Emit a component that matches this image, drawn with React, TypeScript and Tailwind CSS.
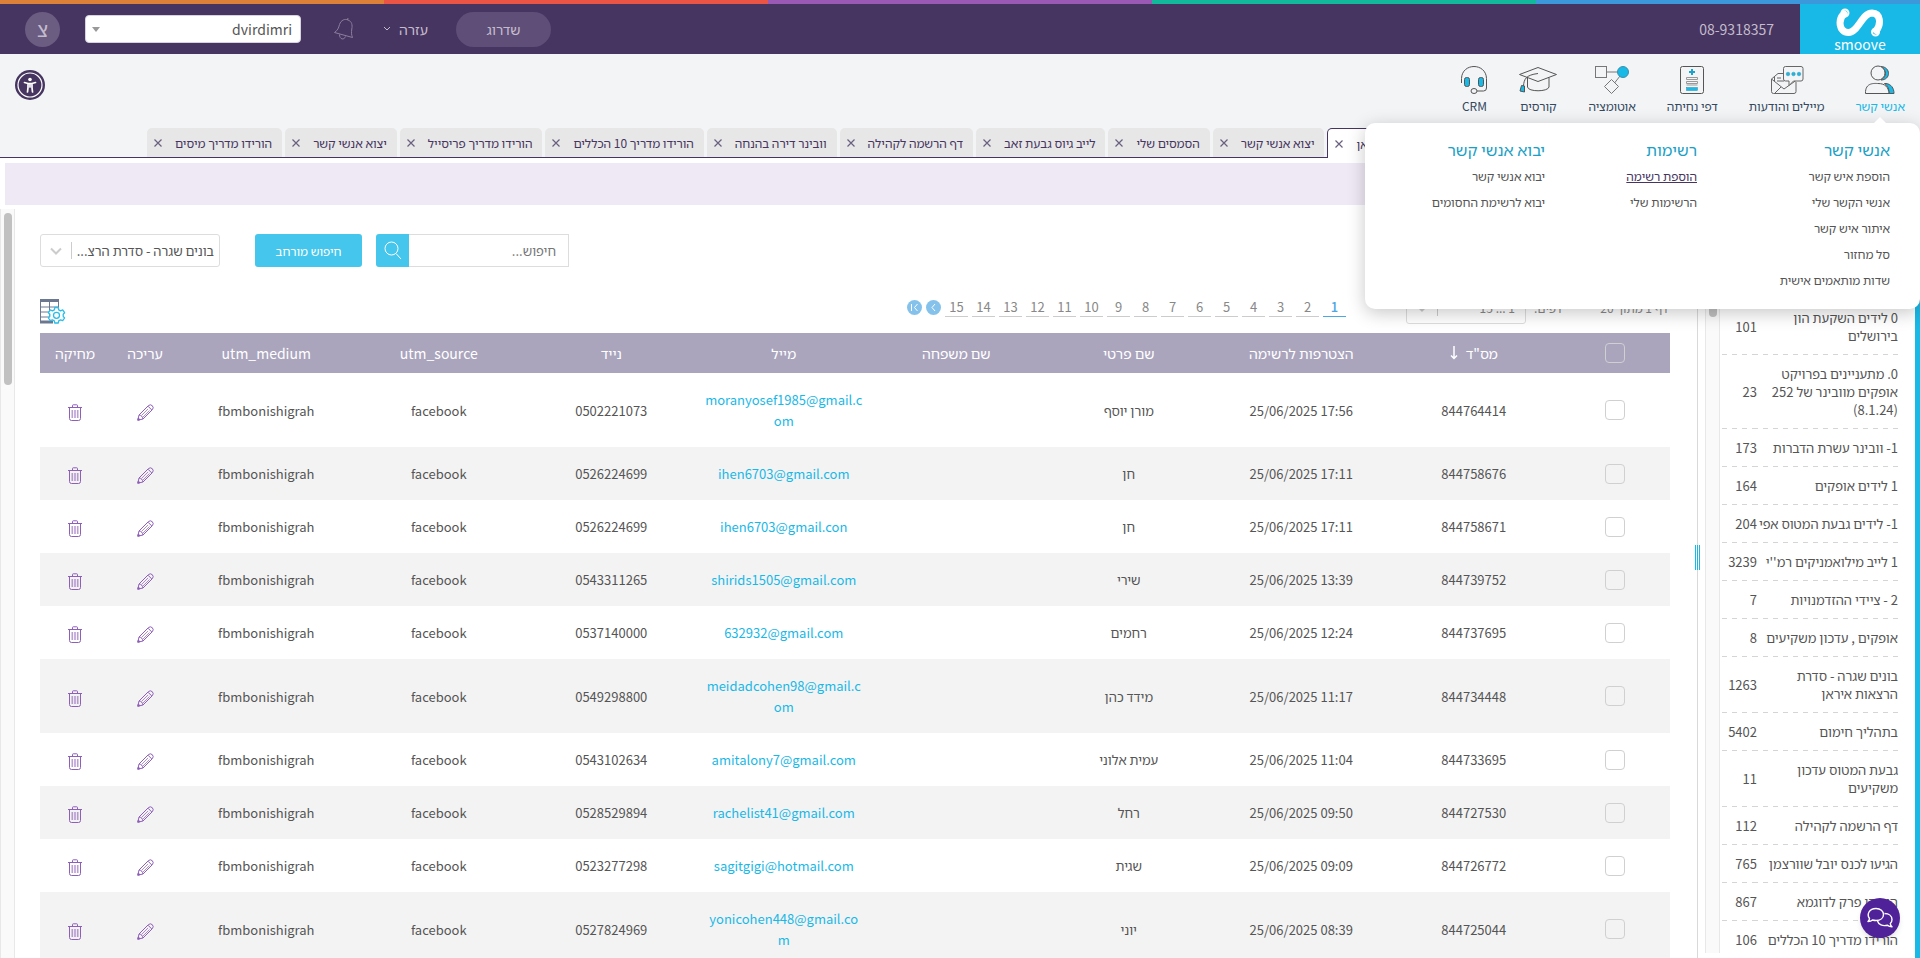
import type { ReactNode } from 'react';
import clsx from 'clsx';

interface Contact {
  id: string;
  joined: string;
  firstName: string;
  email: string;
  phone: string;
}

const contacts: Contact[] = [
  { id: '844764414', joined: '25/06/2025 17:56', firstName: 'מורן יוסף', email: 'moranyosef1985@gmail.com', phone: '0502221073' },
  { id: '844758676', joined: '25/06/2025 17:11', firstName: 'חן', email: 'ihen6703@gmail.com', phone: '0526224699' },
  { id: '844758671', joined: '25/06/2025 17:11', firstName: 'חן', email: 'ihen6703@gmail.con', phone: '0526224699' },
  { id: '844739752', joined: '25/06/2025 13:39', firstName: 'שירי', email: 'shirids1505@gmail.com', phone: '0543311265' },
  { id: '844737695', joined: '25/06/2025 12:24', firstName: 'רחמים', email: '632932@gmail.com', phone: '0537140000' },
  { id: '844734448', joined: '25/06/2025 11:17', firstName: 'מידד כהן', email: 'meidadcohen98@gmail.com', phone: '0549298800' },
  { id: '844733695', joined: '25/06/2025 11:04', firstName: 'עמית אלוני', email: 'amitalony7@gmail.com', phone: '0543102634' },
  { id: '844727530', joined: '25/06/2025 09:50', firstName: 'רחל', email: 'rachelist41@gmail.com', phone: '0528529894' },
  { id: '844726772', joined: '25/06/2025 09:09', firstName: 'שגית', email: 'sagitgigi@hotmail.com', phone: '0523277298' },
  { id: '844725044', joined: '25/06/2025 08:39', firstName: 'יוני', email: 'yonicohen448@gmail.com', phone: '0527824969' },
];

const lists: { name: string; count: number }[] = [
  { name: '0 לידים השקעת הון בירושלים', count: 101 },
  { name: '0. מתעניינים בפרויקט אופקים מוובינר של 252 (8.1.24)', count: 23 },
  { name: '1- וובינר עשרת הדברות', count: 173 },
  { name: '1 לידים אופקים', count: 164 },
  { name: '1- לידים גבעת המטוס אפי', count: 204 },
  { name: "1 לייב מילואמניקים רמ''י", count: 3239 },
  { name: '2 - ציידי ההזדמנויות', count: 7 },
  { name: 'אופקים , עדכון משקיעים', count: 8 },
  { name: 'בונים שגרה - סדרת הרצאות איראן', count: 1263 },
  { name: 'בתהליך חימום', count: 5402 },
  { name: 'גבעת המטוס עדכון משקיעים', count: 11 },
  { name: 'דף הרשמה לקהילה', count: 112 },
  { name: 'הגיעו לכנס יובל שוורצמן', count: 765 },
  { name: 'הורידו פרק לדוגמא', count: 867 },
  { name: 'הורידו מדריך 10 הכללים', count: 106 },
];

const tabs = [
  'בונים שגרה - סדרת הרצאות איראן',
  'יצוא אנשי קשר',
  'הסמסים שלי',
  'לייב גיוס גבעת זאב',
  'דף הרשמה לקהילה',
  'וובינר דירה בהנחה',
  'הורידו מדריך 10 הכללים',
  'הורידו מדריך פריסייל',
  'יצוא אנשי קשר',
  'הורידו מדריך מיסים',
];

const menuColumns = [
  {
    title: 'אנשי קשר',
    width: 'w-[193px]',
    items: ['הוספת איש קשר', 'אנשי הקשר שלי', 'איתור איש קשר', 'סל מחזור', 'שדות מותאמים אישית'],
  },
  { title: 'רשימות', width: 'w-[152px]', items: ['הוספת רשימה', 'הרשימות שלי'] },
  { title: 'יבוא אנשי קשר', width: 'w-[150px]', items: ['יבוא אנשי קשר', 'יבוא לרשימת החסומים'] },
];

const stripes = ['bg-[#dd8138]', 'bg-[#e95445]', 'bg-[#9b59b6]', 'bg-[#12b99b]', 'bg-[#3c97db]'];

const dashed = 'bg-[repeating-linear-gradient(to_left,#d5d5d5_0_5px,transparent_5px_10px)] bg-[length:100%_1px] bg-bottom bg-no-repeat';

function Logo() {
  return (
    <a href="#" aria-label="smoove" className="w-[120px] h-[50px] bg-[#18b8e7] flex flex-col items-center pt-1 text-white">
      <svg width="48" height="30" viewBox="0 0 48 30" fill="none" stroke="#fff" strokeLinecap="round">
        <path d="M8 6 C2 11 2.500 24.500 12.500 24.500 C22 24.500 26 5 36 5 C45 5.500 45 16 40.500 22.500" strokeWidth="7" />
        <circle cx="9" cy="5" r="1" strokeWidth="7" />
        <circle cx="39.500" cy="24" r="1" strokeWidth="7" />
      </svg>
      <span className="text-sm leading-3">smoove</span>
    </a>
  );
}

function ContactsIcon() {
  return (
    <svg width="32" height="30" viewBox="0 0 32 30" fill="none" stroke="#555" strokeWidth="1">
      <path d="M17 1.500 C27 2 27 15 17 15 C23 11 23 6 17 1.500 Z M22 18.500 C27 19 30 23 30 28.500 L25 28.500 C25 24 24 21 20.500 18.500 Z" fill="#18b8e7" />
      <circle cx="14" cy="8" r="7" fill="#f3f4f6" />
      <path d="M1.500 28.500 C1 17 11 18.500 14 18.500 C21 18.500 24.500 22 25 28.500 Z" fill="#f3f4f6" />
    </svg>
  );
}

function MailIcon() {
  return (
    <svg width="34" height="30" viewBox="0 0 34 30" fill="none" stroke="#666" strokeWidth="1">
      <path d="M13 8.500 H8 L1.500 14 V26.500 Q1.500 28.500 3.500 28.500 H24 Q26 28.500 26 26.500 V17" />
      <path d="M1.500 14 L14 24 L26 15.500 M4.500 12 V16 M7 13 H11 M7 16 H14 M5 28 L11 22" />
      <path d="M15.500 1.500 H31 Q33 1.500 33 3.500 V14 Q33 16 31 16 H23.500 L19 20.500 V16 H15.500 Q13.500 16 13.500 14 V3.500 Q13.500 1.500 15.500 1.500 Z" fill="#f3f4f6" />
      <g fill="#18b8e7" stroke="#3b91ab" strokeWidth="0.500">
        <circle cx="18" cy="9" r="1.800" />
        <circle cx="23.500" cy="9" r="1.800" />
        <circle cx="29" cy="9" r="1.800" />
      </g>
    </svg>
  );
}

function LandingIcon() {
  return (
    <svg width="26" height="30" viewBox="0 0 26 30" fill="none" stroke="#555" strokeWidth="1">
      <rect x="1.500" y="1.500" width="23" height="27" rx="2" />
      <path d="M13 4 V10 M10 7 H16" stroke="#1ba4cd" strokeWidth="2" />
      <path d="M7.500 12.500 H18.500 V14.500 H7.500 Z M7.500 16.500 H18.500 V18.500 H7.500 Z M7.500 20 H18.500" stroke="#999" />
      <rect x="7.500" y="22.500" width="11" height="3" fill="#18b8e7" stroke="#2f8ca8" strokeWidth="0.500" />
    </svg>
  );
}

function AutomationIcon() {
  return (
    <svg width="36" height="30" viewBox="0 0 36 30" fill="none" stroke="#777" strokeWidth="1">
      <rect x="1.500" y="1.500" width="11" height="11" />
      <path d="M12.500 7 H24 M26 11 L20.500 18" />
      <path d="M17.500 14.500 L24.500 21.500 L17.500 28.500 L10.500 21.500 Z" />
      <circle cx="29" cy="7" r="5.500" fill="#18b8e7" stroke="#3b91ab" />
    </svg>
  );
}

function CoursesIcon() {
  return (
    <svg width="38" height="30" viewBox="1 0 38 30" fill="none" stroke="#555" strokeWidth="1">
      <path d="M1.500 9.500 L20 2.500 L38.500 9.500 L20 16.500 Z" />
      <path d="M9.500 13 V22 C10 27 30 27 31 22 V12.500 M20 8.500 C8 10 6 14 5.500 21" />
      <path d="M3.500 20.500 L6.500 21 V27 L2 26 Z" fill="#18b8e7" />
    </svg>
  );
}

function CrmIcon() {
  return (
    <svg width="28" height="30" viewBox="0 0 28 30" fill="none" stroke="#555" strokeWidth="1">
      <path d="M1.500 18 V13.500 C2 -2.500 26 -2.500 26.500 13.500 V23 Q26.500 26 23.500 26 H17" />
      <rect x="4.500" y="12.500" width="5" height="9" rx="2" fill="#18b8e7" />
      <rect x="18.500" y="12.500" width="5" height="9" rx="2" fill="#18b8e7" />
      <ellipse cx="14" cy="26" rx="3" ry="2.500" />
    </svg>
  );
}

const navItems: { label: string; icon: ReactNode; active?: boolean }[] = [
  { label: 'אנשי קשר', icon: <ContactsIcon />, active: true },
  { label: 'מיילים והודעות', icon: <MailIcon /> },
  { label: 'דפי נחיתה', icon: <LandingIcon /> },
  { label: 'אוטומציה', icon: <AutomationIcon /> },
  { label: 'קורסים', icon: <CoursesIcon /> },
  { label: 'CRM', icon: <CrmIcon /> },
];

function Header() {
  return (
    <header className="h-[50px] shrink-0 bg-[#463560] flex items-center text-[#c4bccd]">
      <Logo />
      <a href="tel:08-9318357" className="mr-[26px] text-sm">08-9318357</a>
      <div className="flex-1" />
      <button className="w-[95px] h-[35px] rounded-full bg-[#5f4e78] text-sm">שדרוג</button>
      <button className="mr-7 flex items-center gap-2 text-sm">
        עזרה
        <svg width="8" height="6" viewBox="0 0 8 6" fill="none" stroke="currentColor"><path d="M1 1 L4 4 L7 1" /></svg>
      </button>
      <button aria-label="התראות" className="mr-7">
        <svg width="22" height="24" viewBox="0 0 22 24" fill="none" stroke="#8b7f9d" strokeWidth="1" strokeLinejoin="round">
          <path d="M1.500 15.500 C5 13 5.500 11 6.500 7.500 C8 3 12 1.500 15 3 C19 4.500 19.500 8 18.800 12 C18.200 16 18.500 18 19.500 20.500 Z M14.500 3 L15 1" />
          <path d="M6.500 17.500 C6.500 22.500 11 23.500 12.500 19.500" />
        </svg>
      </button>
      <div className="relative mr-8">
        <select aria-label="חשבון" className="appearance-none w-[216px] h-7 rounded bg-white border border-[#d7d3de] pr-2 pl-6 text-sm leading-6 text-[#555]">
          <option>dvirdimri</option>
        </select>
        <svg className="absolute left-[7px] top-3 pointer-events-none" width="8" height="5" viewBox="0 0 8 5"><path d="M0 0 H8 L4 5 Z" fill="#999" /></svg>
      </div>
      <button className="mx-[25px] size-[35px] rounded-full bg-[#6b5c82] text-xl leading-none">צ</button>
    </header>
  );
}

function ContactsMenu() {
  return (
    <div className="absolute z-20 right-0 top-[69px] w-[555px] h-[186px] bg-white rounded-[10px] shadow-[0_4px_18px_rgba(0,0,0,0.22)] pr-[30px] pt-3.5 flex items-start">
      <svg className="absolute -top-[6px] right-[33px]" width="14" height="7" viewBox="0 0 14 7"><path d="M0 7 L7 0 L14 7 Z" fill="#fff" /></svg>
      {menuColumns.map((col) => (
        <div key={col.title} className={col.width}>
          <h3 className="text-base leading-6 mb-0.5 text-[#1b9fc6]">{col.title}</h3>
          <ul>
            {col.items.map((item) => (
              <li key={item} className="h-[26px] flex items-center text-xs whitespace-nowrap">
                <a href="#" className={item === 'הוספת רשימה' ? 'underline text-[#463560]' : 'text-[#555]'}>{item}</a>
              </li>
            ))}
          </ul>
        </div>
      ))}
    </div>
  );
}

function NavBar() {
  return (
    <div className="relative h-[74px] shrink-0 flex items-start justify-between px-[15px]">
      <nav className="flex gap-[31px] pt-[11px]">
        {navItems.map(({ label, icon, active }) => (
          <a key={label} href="#" className={clsx('flex flex-col items-center text-xs leading-[22px] whitespace-nowrap', active ? 'text-[#18b8e7]' : 'text-[#34495e]')}>
            {icon}
            {label}
          </a>
        ))}
      </nav>
      <button aria-label="נגישות" className="mt-4">
        <svg width="30" height="30" viewBox="0 0 30 30" fill="none">
          <circle cx="15" cy="15" r="15" fill="#463560" />
          <circle cx="15" cy="15" r="12" stroke="#fff" strokeWidth="1.200" />
          <circle cx="15" cy="9.500" r="1.800" fill="#fff" />
          <path d="M9.500 12.500 L13 13.500 H17 L20.500 12.500 M15 14 V17 M13 13.500 V17.500 L12.500 22 M17 13.500 V17.500 L17.500 22" stroke="#fff" strokeWidth="1.700" strokeLinecap="round" />
        </svg>
      </button>
      <ContactsMenu />
    </div>
  );
}

function Tabs() {
  return (
    <div className="h-[30px] shrink-0 flex justify-end items-stretch gap-[3px] pl-[147px] shadow-[inset_0_-1px_0_#463560]">
      {tabs.map((tab, i) => (
        <div
          key={i}
          className={clsx(
            'flex items-center gap-[13px] pr-2.5 pl-[7px] rounded-t-[5px] text-xs text-[#463560] whitespace-nowrap',
            i === 0 ? 'bg-white border border-b-0 border-[#463560]' : 'bg-[#e7e7e7] mb-px',
          )}
        >
          <button>{tab}</button>
          <button aria-label="סגירה">
            <svg width="8" height="8" viewBox="0 0 8 8" stroke="#6b5f80" strokeWidth="1.200"><path d="M0.500 0.500 L7.500 7.500 M7.500 0.500 L0.500 7.500" /></svg>
          </button>
        </div>
      ))}
    </div>
  );
}

function Sidebar() {
  return (
    <aside className="flex shrink-0 border-r-[5px] border-[#18b8e7] pb-[5px]">
      <div className="w-[195px] pr-[17px] overflow-hidden pt-[90px]">
        <ul>
          {lists.map(({ name, count }) => (
            <li key={name} className="flex items-stretch text-[13px] leading-[18px] text-[#555]">
              <a href="#" className={clsx('flex-1 py-2.5 flex items-center', dashed)}>{name}</a>
              <span className={clsx('w-[37px] flex items-center whitespace-nowrap', dashed)}>{count}</span>
            </li>
          ))}
        </ul>
      </div>
      <div className="w-[15px] bg-[#fafafa] border-x border-[#e8e8e8] pt-1 flex justify-center">
        <div className="w-2 h-[104px] rounded-full bg-[#c1c1c1]" />
      </div>
    </aside>
  );
}

function Splitter() {
  return (
    <div className="w-[15px] shrink-0 flex justify-center">
      <div className="relative w-px bg-[#d9d9d9]">
        <div className="absolute -left-0.5 top-[336px] w-[5px] h-[25px] bg-white border-x border-[#18b8e7] flex justify-center">
          <div className="w-px bg-[#18b8e7]" />
        </div>
      </div>
    </div>
  );
}

function SelectArrow() {
  return (
    <span className="absolute left-0 inset-y-2 w-8 border-r border-[#ccc] flex items-center justify-center pointer-events-none">
      <svg width="12" height="8" viewBox="0 0 12 8" fill="none" stroke="#ccc" strokeWidth="2"><path d="M1 1.500 L6 6.500 L11 1.500" /></svg>
    </span>
  );
}

function Toolbar() {
  return (
    <div className="flex justify-end">
      <label className="relative flex h-[33px]">
        <input type="text" placeholder="חיפוש..." aria-label="חיפוש" className="w-40 border border-[#ddd] border-l-0 px-3 text-[13px] placeholder:text-[#777]" />
        <button aria-label="חפש" className="w-[33px] bg-[#45c6ec] rounded-l-[3px] flex items-center justify-center">
          <svg width="18" height="19" viewBox="0 0 18 19" fill="none" stroke="#fff" strokeWidth="1"><circle cx="7.500" cy="7.500" r="6.500" /><path d="M12 12.500 L17 18" /></svg>
        </button>
      </label>
      <button className="mr-3.5 w-[107px] h-[33px] rounded-[3px] bg-[#45c6ec] text-white text-xs">חיפוש מורחב</button>
      <div className="relative mr-[35px]">
        <select aria-label="רשימה" className="appearance-none w-[180px] h-[33px] rounded-[3px] border border-[#ddd] bg-white pr-[5px] pl-8 text-[13px] text-[#555]">
          <option>בונים שגרה - סדרת הרצ...</option>
        </select>
        <SelectArrow />
      </div>
    </div>
  );
}

function Pagination() {
  return (
    <div className="flex items-end h-[34px] mt-[23px] text-xs text-[#888]">
      <div className="w-36 pl-2 pr-0.5 h-[33px] leading-[33px] flex justify-between whitespace-nowrap">
        <span>דף 1 מתוך 20</span>
        <label htmlFor="page-range">דפים:</label>
      </div>
      <div className="relative">
        <select id="page-range" className="appearance-none block w-[120px] h-[33px] rounded-[3px] border border-[#ddd] bg-white pr-2.5 text-xs">
          <option>1 ... 15</option>
        </select>
        <SelectArrow />
      </div>
      <div className="mr-[60px] mb-[7px] flex gap-1 items-center text-[13px]">
        {Array.from({ length: 15 }, (_, i) => (
          <button key={i} className={clsx('w-[23px] h-5 leading-[18px] border-b text-center', i === 0 ? 'text-[#4da7e3] border-[#4da7e3] font-medium' : 'border-[#ccc]')}>
            {i + 1}
          </button>
        ))}
        <button aria-label="הבא">
          <svg width="15" height="15" viewBox="0 0 15 15" fill="none" stroke="#fff"><circle cx="7.500" cy="7.500" r="7.500" fill="#85c2eb" stroke="none" /><path d="M9 4 L6 7.500 L9 11" /></svg>
        </button>
        <button aria-label="אחרון">
          <svg width="15" height="15" viewBox="0 0 15 15" fill="none" stroke="#fff"><circle cx="7.500" cy="7.500" r="7.500" fill="#85c2eb" stroke="none" /><path d="M10.500 4 L7.500 7.500 L10.500 11 M4.500 4 V11" /></svg>
        </button>
      </div>
      <div className="flex-1" />
      <button aria-label="הגדרות עמודות">
        <svg width="26" height="25" viewBox="0 0 26 25" fill="none">
          <path d="M0.500 3 V23.500 H13 M18.500 3 V9 M9.500 3 V20 M0.500 8 H18 M0.500 13 H10 M0.500 18 H9" stroke="#6c7890" />
          <path d="M0 1.500 H19 M0 23 H13" stroke="#6c7890" strokeWidth="3" />
          <path d="M14.800 8.500 H18.200 L18.700 10.800 L20.600 11.800 L22.700 10.900 L24.600 13.700 L23.200 15.300 V17.300 L24.600 19 L22.700 21.700 L20.600 20.900 L18.700 21.900 L18.200 24 H14.800 L14.300 21.900 L12.400 20.900 L10.300 21.700 L8.400 19 L9.800 17.300 V15.300 L8.400 13.700 L10.300 10.900 L12.400 11.800 L14.300 10.800 Z" fill="#fff" stroke="#29bde9" strokeWidth="1.300" strokeLinejoin="round" />
          <circle cx="16.500" cy="16.300" r="3" stroke="#29bde9" strokeWidth="1.300" />
        </svg>
      </button>
    </div>
  );
}

function Checkbox({ label }: { label: string }) {
  return <input type="checkbox" aria-label={label} className="appearance-none block mx-auto size-5 rounded border border-[#d0d0d3]" />;
}

function ContactsTable() {
  return (
    <table className="w-full table-fixed mt-[9px] text-center text-[13px] text-[#555]">
      <colgroup>
        <col className="w-[110px]" />
        <col span={8} />
        <col className="w-[70px]" />
        <col className="w-[70px]" />
      </colgroup>
      <thead>
        <tr className="h-10 bg-[#aaa5bd] text-white text-sm">
          <th><Checkbox label="בחר הכל" /></th>
          <th className="font-normal">
            <span className="inline-flex items-center gap-2">
              מס"ד
              <svg width="8" height="14" viewBox="0 0 8 14" fill="none" stroke="#fff" strokeWidth="1.500"><path d="M4 0 V12 M1 9.500 L4 12.500 L7 9.500" /></svg>
            </span>
          </th>
          {['הצטרפות לרשימה', 'שם פרטי', 'שם משפחה', 'מייל', 'נייד', 'utm_source', 'utm_medium', 'עריכה', 'מחיקה'].map((h) => (
            <th key={h} className="font-normal">{h}</th>
          ))}
        </tr>
      </thead>
      <tbody>
        {contacts.map((c) => (
          <tr key={c.id} className="h-[53px] even:bg-[#f3f3f3] leading-[21px]">
            <td><Checkbox label={c.id} /></td>
            <td>{c.id}</td>
            <td dir="ltr">{c.joined}</td>
            <td>{c.firstName}</td>
            <td />
            <td className="px-[7px] py-4 break-all"><a href="#" dir="ltr" className="text-[#18b8e7]">{c.email}</a></td>
            <td>{c.phone}</td>
            <td>facebook</td>
            <td>fbmbonishigrah</td>
            <td className="pt-1">
              <button aria-label="עריכה" className="block mx-auto">
                <svg width="17" height="17" viewBox="0 0 17 17" fill="none" stroke="#8e5fb8" strokeWidth="1" strokeLinejoin="round">
                  <path d="M0.800 16.200 L2 11 L11.500 1.500 Q13.500 0 15.300 1.700 Q17 3.500 15.500 5.500 L6 15 Z M2 11 C4 11 5.500 12.500 6 15 M11 2.200 L14.800 6" />
                  <path d="M4.500 11.500 L11 5 M6 13 L12.500 6.500" strokeOpacity="0.700" />
                  <path d="M0.800 16.200 L1.300 14 L3 15.700 Z" fill="#8e5fb8" />
                </svg>
              </button>
            </td>
            <td className="pt-1">
              <button aria-label="מחיקה" className="block mx-auto">
                <svg width="14" height="17" viewBox="0 0 14 17" fill="none" stroke="#8e5fb8" strokeWidth="1">
                  <path d="M0 3.500 H14 M4.500 3.500 V1.500 Q4.500 0.800 5.200 0.800 H8.800 Q9.500 0.800 9.500 1.500 V3.500 M1.500 3.500 V14.500 Q1.500 16.500 3.500 16.500 H10.500 Q12.500 16.500 12.500 14.500 V3.500" />
                  <path d="M4.300 6 V14 M7 6 V14 M9.700 6 V14" strokeWidth="1.600" strokeOpacity="0.600" />
                </svg>
              </button>
            </td>
          </tr>
        ))}
      </tbody>
    </table>
  );
}

export default function App() {
  return (
    <div
      dir="rtl"
      className="h-screen overflow-hidden flex flex-col bg-white font-['Noto_Sans_CJK_JP','Noto_Sans_Hebrew','Open_Sans','Noto_Sans',sans-serif] text-[#555]"
    >
      <div className="flex flex-row-reverse h-1 shrink-0">
        {stripes.map((color) => (
          <div key={color} className={clsx('flex-1', color)} />
        ))}
      </div>
      <Header />
      <div className="bg-[#f3f4f6] shrink-0">
        <NavBar />
        <Tabs />
      </div>
      <div className="mx-[5px] mt-[5px] mb-1 h-[42px] shrink-0 bg-[#efe9f5]" />

      <div className="flex-1 min-h-0 flex">
        <Sidebar />
        <Splitter />
        <main className="flex-1 min-w-0 overflow-hidden pt-[25px] pr-5 pl-[25px]">
          <Toolbar />
          <Pagination />
          <ContactsTable />
        </main>
        <div className="w-[15px] shrink-0 bg-[#fafafa] border-x border-[#e8e8e8] pt-1 flex justify-center">
          <div className="w-2 h-[172px] rounded-full bg-[#c1c1c1]" />
        </div>
      </div>

      <button aria-label="צ'אט" className="fixed z-30 right-5 bottom-5 size-10 rounded-full bg-[#4f2299] shadow-md flex items-center justify-center">
        <svg width="26" height="22" viewBox="0 0 26 22" fill="none" stroke="#fff" strokeWidth="1.400" strokeLinejoin="round">
          <path d="M9 1.500 C13.500 1.500 16.500 4 16.500 7.500 C16.500 11 13.500 13.500 9 13.500 C7.500 13.500 6.500 13.300 5.500 13 C4.500 14 3 14.500 1 14.500 C2 13.500 2.500 12.500 2.500 11.500 C-0.500 7.500 2 1.500 9 1.500 Z" />
          <path d="M17.500 6.500 C22 6.500 25 9 25 12.500 C25 14 24.500 15.500 23.300 16.500 C23.500 18 24 19 25 19.800 C23 19.800 21.500 19.200 20.500 18.200 C15.500 19.500 11.500 17.500 10.500 14" />
        </svg>
      </button>
    </div>
  );
}
